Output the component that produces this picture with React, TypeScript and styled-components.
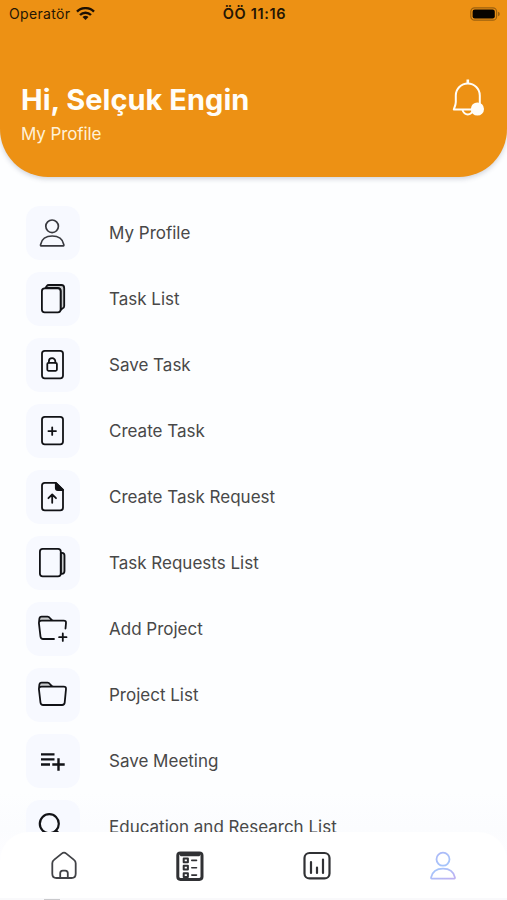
import React from "react";
import styled, { createGlobalStyle } from "styled-components";

const GlobalStyle = createGlobalStyle`
  * { box-sizing: border-box; }
  body { margin: 0; background: #fcfdff; font-family: Inter, "Liberation Sans", sans-serif; }
`;

const Screen = styled.div`
  height: 900px;
  display: flex;
  flex-direction: column;
  overflow: hidden;
  background: linear-gradient(#fdfeff 88%, #fbfcfe 92%, #fdfdff 95%);
`;

const Header = styled.header`
  flex: none;
  height: 177px;
  background: #ed9114;
  border-radius: 0 0 48px 48px;
  box-shadow: 0 2px 5px rgba(50, 60, 90, 0.22);
`;

const StatusBar = styled.div`
  height: 27px;
  padding: 0 7px 0 9px;
  display: grid;
  grid-template-columns: 1fr auto 1fr;
  align-items: center;
  color: #241604;
  font-size: 14px;
`;

const Carrier = styled.div`
  display: flex;
  align-items: center;
  gap: 6px;
  letter-spacing: 0.35px;
`;

const Clock = styled.div`
  font-weight: 600;
  font-size: 14.5px;
  letter-spacing: 0.65px;
`;

const Battery = styled.svg`
  justify-self: end;
  display: block;
`;

const Greeting = styled.div`
  padding: 51px 21px 0;
  display: flex;
  justify-content: space-between;
  color: #fffdf8;
`;

const Name = styled.h1`
  margin: 0;
  font-size: 29px;
  line-height: 43px;
  font-weight: 700;
  letter-spacing: 0.02px;
`;

const Subtitle = styled.p`
  margin: 2px 0 0;
  font-size: 17px;
  line-height: 22px;
  letter-spacing: -0.1px;
  color: #fff1d8;
`;

const Menu = styled.main`
  flex: 1;
  min-height: 0;
  overflow: hidden;
  padding: 29px 26px 0;
  display: flex;
  flex-direction: column;
  gap: 12px;
`;

const MenuRow = styled.div`
  flex: none;
  height: 54px;
  display: flex;
  align-items: center;
  gap: 29px;
`;

const Tile = styled.div`
  width: 54px;
  height: 54px;
  border-radius: 14px;
  background: #f7f9ff;
`;

const Label = styled.span`
  font-size: 17px;
  line-height: 24px;
  color: #484848;
  white-space: nowrap;
`;

const TabBar = styled.nav`
  flex: none;
  height: 68px;
  padding: 0 1px;
  display: grid;
  grid-template-columns: repeat(4, 1fr);
  justify-items: center;
  align-items: center;
  background:
    linear-gradient(#c9c9cc, #c9c9cc) 44px 67px / 16px 1px no-repeat,
    linear-gradient(#fff 66px, #f9f9fb 66px);
  border-radius: 28px 28px 0 0;
`;

const Glyph = styled.svg`
  display: block;
  fill: none;
  stroke: ${(p) => p.color ?? "#111216"};
  stroke-width: 1.8;
  stroke-linecap: round;
  stroke-linejoin: round;
`;

const page = <rect x="16" y="12.8" width="21" height="27.6" rx="2.8" />;

const items: { label: string; icon: React.ReactNode }[] = [
  {
    label: "My Profile",
    icon: (
      <g stroke="#38393f" strokeWidth="1.7">
        <circle cx="26.1" cy="20.3" r="6.3" />
        <path d="M15 39.8h22.4q.6 0 .4-1.2C36.9 33.2 32.4 30 26.2 30S15.5 33.2 14.6 38.6q-.2 1.2.4 1.2z" />
      </g>
    ),
  },
  {
    label: "Task List",
    icon: (
      <>
        <path d="M19.5 16l1.3-2q.7-1 2-1H35.3q2.9 0 2.9 3.2V34q0 2-1.6 2.4L34.6 38V19q0-3-3-3z" fill="#c9cbcd" />
        <rect x="15.9" y="16.4" width="18.7" height="24" rx="2.8" fill="#f7f9ff" />
      </>
    ),
  },
  {
    label: "Save Task",
    icon: (
      <>
        {page}
        <rect x="21.3" y="24.8" width="9.6" height="8" rx="1.2" />
        <path d="M22.9 24.5v-1.2a3.2 3.2 0 0 1 6.4 0v1.2" />
      </>
    ),
  },
  {
    label: "Create Task",
    icon: (
      <>
        {page}
        <path d="M26.2 23.3v7.6M22.4 27.1H30" />
      </>
    ),
  },
  {
    label: "Create Task Request",
    icon: (
      <>
        <path d="M29.8 12.8H18.8Q16 12.8 16 15.6v22q0 2.8 2.8 2.8h15.4q2.8 0 2.8-2.8V20z" />
        <path d="M29.8 12.8L37 20h-5.2q-2 0-2-2z" fill="#111216" />
        <path d="M26.2 32.8v-8M22.4 28.2l3.8-3.7 3.8 3.7" />
      </>
    ),
  },
  {
    label: "Task Requests List",
    icon: (
      <>
        <path d="M34.8 16.8h1.2q2.5 0 2.5 2.6V35q0 2.8-2.7 2.8h-1z" fill="#c9cbcd" />
        <rect x="13.9" y="12.9" width="20.9" height="27.5" rx="2.8" />
      </>
    ),
  },
  {
    label: "Add Project",
    icon: (
      <>
        <path d="M13.3 18.8l.3-2.5q.2-1.7 2-1.7h6q1.4 0 2.5 1.4l2.3 2.4z" fill="#c9cbcd" stroke="none" />
        <path d="M28 37H17.1q-2.3 0-2.6-2.3L12.9 21l.5-4.3q.2-2.1 2.2-2.1h6q1.3 0 2.3 1.4l1.2 1.4q1 1.2 2.6 1.2h10q2.5 0 2.3 2.4l-.5 5.5M13 20q.6-1.3 2.7-1.3h12" />
        <path d="M36.8 31.5v7.4M33.1 35.2h7.4" />
      </>
    ),
  },
  {
    label: "Project List",
    icon: (
      <>
        <path d="M13.3 18.8l.3-2.5q.2-1.7 2-1.7h6q1.4 0 2.5 1.4l2.3 2.4z" fill="#c9cbcd" stroke="none" />
        <path d="M17.1 37q-2.3 0-2.6-2.3L12.9 21l.5-4.3q.2-2.1 2.2-2.1h6q1.3 0 2.3 1.4l1.2 1.4q1 1.2 2.6 1.2h10q2.5 0 2.3 2.4l-1.3 13.7q-.2 2.3-2.6 2.3zM13 20q.6-1.3 2.7-1.3h12" />
      </>
    ),
  },
  {
    label: "Save Meeting",
    icon: (
      <path
        d="M15 20.4h13.5M15 25.4h13.5M15 30.5h9M26.3 30.5h12.4M32.5 24.3v12.4"
        strokeWidth="2.4"
        strokeLinecap="butt"
      />
    ),
  },
  {
    label: "Education and Research List",
    icon: (
      <g strokeWidth="2.2">
        <circle cx="23.3" cy="23.7" r="9.5" />
        <path d="M30 30.5l8 8" />
      </g>
    ),
  },
];

export default function App() {
  return (
    <>
      <GlobalStyle />
      <Screen>
        <Header>
          <StatusBar>
            <Carrier>
              Operatör
              <svg width="19" height="14" viewBox="0 0 19 14" fill="none" stroke="#1d1003" strokeWidth="2.4">
                <path d="M1 4.7a12 12 0 0 1 17 0M4 8a7.8 7.8 0 0 1 11 0" />
                <path d="M6.5 10.1a4.3 4.3 0 0 1 6 0L9.5 13.1z" fill="#1d1003" stroke="none" />
              </svg>
            </Carrier>
            <Clock>ÖÖ 11:16</Clock>
            <Battery width="30" height="14" viewBox="0 0 30 14">
              <rect x="0.8" y="0.8" width="25.8" height="12.4" rx="3.8" fill="none" stroke="#9c610f" strokeWidth="1.2" />
              <rect x="2.6" y="2.6" width="22.2" height="8.8" rx="2.2" fill="#080400" />
              <path d="M28 4.7q1.8.6 1.8 2.3T28 9.3z" fill="#9c610f" />
            </Battery>
          </StatusBar>
          <Greeting>
            <div>
              <Name>Hi, Selçuk Engin</Name>
              <Subtitle>My Profile</Subtitle>
            </div>
            <svg width="34" height="40" viewBox="0 0 34 40" fill="none" stroke="#fffdf8" strokeWidth="2" strokeLinejoin="round">
              <path d="M15.8 1.5v4" strokeWidth="2.6" />
              <path d="M1.8 31.5H29L27.8 27V17.5a12 12 0 0 0-24 0V24c0 3-1.5 5.5-2 7.5z" />
              <path d="M10.5 32c1 3 3 4.4 5.3 4.4s4.3-1.4 5.3-4.4" />
              <circle cx="25.4" cy="31" r="6.6" fill="#fffdf8" stroke="none" />
            </svg>
          </Greeting>
        </Header>
        <Menu>
          {items.map(({ label, icon }) => (
            <MenuRow key={label}>
              <Tile>
                <Glyph width="54" height="54" viewBox="0 0 54 54">
                  {icon}
                </Glyph>
              </Tile>
              <Label>{label}</Label>
            </MenuRow>
          ))}
        </Menu>
        <TabBar>
          <Glyph width="30" height="32" viewBox="0 0 30 32" color="#414246">
            <path d="M3.3 13.2q0-2 1.7-3.3l7.7-6.3q2.3-1.8 4.6 0L25 9.9q1.7 1.3 1.7 3.3v10.5q0 4.3-4.2 4.3h-15q-4.2 0-4.2-4.3z" />
            <path d="M11.2 28v-4.8q0-2.6 2.6-2.6h2.4q2.6 0 2.6 2.6V28" />
          </Glyph>
          <Glyph width="30" height="32" viewBox="0 0 30 32" color="#303134">
            <rect x="2.8" y="3" width="24.2" height="26.4" rx="2.6" strokeWidth="3" />
            <path d="M6 3.8h18v1.5H6z" strokeWidth="2" fill="#303134" />
            <path d="M8.7 8.5h4.2v3.8H8.7zM8.7 15.8h4.2v3.8H8.7zM8.7 23.2h4.2v3.8H8.7z" strokeWidth="2" />
            <path d="M16.8 10.4h4.7M16.8 17.7h4.7M16.8 25.1h4.7" strokeWidth="1.6" />
          </Glyph>
          <Glyph width="30" height="32" viewBox="0 0 30 32" color="#303134">
            <rect x="2.5" y="3" width="25" height="25.4" rx="5" strokeWidth="2.2" />
            <path d="M9 12v11M15 17.5V23M21 9.5V23" strokeWidth="2.2" />
          </Glyph>
          <Glyph width="30" height="32" viewBox="0 0 30 32" color="url(#activeTab)">
            <defs>
              <linearGradient id="activeTab" gradientUnits="userSpaceOnUse" x1="8" y1="3" x2="22" y2="29">
                <stop stopColor="#adb9f7" />
                <stop offset=".5" stopColor="#a5c4fb" />
                <stop offset="1" stopColor="#bdb2f2" />
              </linearGradient>
            </defs>
            <circle cx="15" cy="9.2" r="6.5" />
            <path d="M3.8 28.6h22.4q.9 0 .7-1.2C25.7 21.8 21.3 18.6 15 18.6S4.3 21.8 3.1 27.4q-.2 1.2.7 1.2z" />
          </Glyph>
        </TabBar>
      </Screen>
    </>
  );
}
